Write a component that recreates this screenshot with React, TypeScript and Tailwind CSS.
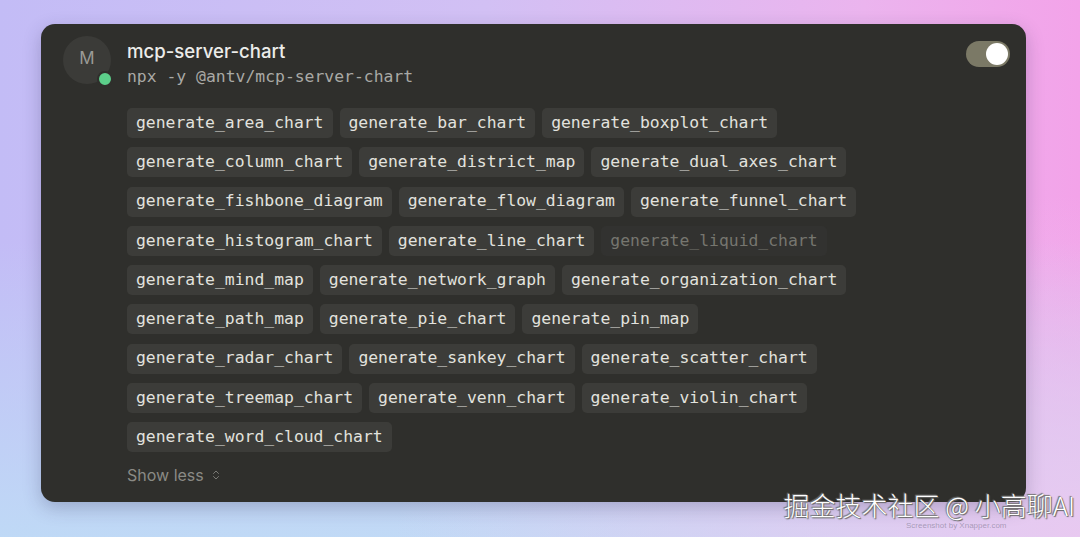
import React from 'react';
import { ChevronsUpDown } from 'lucide-react';

const tools: { name: string; disabled?: boolean }[] = [
  { name: 'generate_area_chart' },
  { name: 'generate_bar_chart' },
  { name: 'generate_boxplot_chart' },
  { name: 'generate_column_chart' },
  { name: 'generate_district_map' },
  { name: 'generate_dual_axes_chart' },
  { name: 'generate_fishbone_diagram' },
  { name: 'generate_flow_diagram' },
  { name: 'generate_funnel_chart' },
  { name: 'generate_histogram_chart' },
  { name: 'generate_line_chart' },
  { name: 'generate_liquid_chart', disabled: true },
  { name: 'generate_mind_map' },
  { name: 'generate_network_graph' },
  { name: 'generate_organization_chart' },
  { name: 'generate_path_map' },
  { name: 'generate_pie_chart' },
  { name: 'generate_pin_map' },
  { name: 'generate_radar_chart' },
  { name: 'generate_sankey_chart' },
  { name: 'generate_scatter_chart' },
  { name: 'generate_treemap_chart' },
  { name: 'generate_venn_chart' },
  { name: 'generate_violin_chart' },
  { name: 'generate_word_cloud_chart' },
];

// row breaks follow the screenshot
const rows = [
  [0, 1, 2],
  [3, 4, 5],
  [6, 7, 8],
  [9, 10, 11],
  [12, 13, 14],
  [15, 16, 17],
  [18, 19, 20],
  [21, 22, 23],
  [24],
];

const App = () => {
  return (
    <div className="relative h-[537px] w-[1080px] overflow-hidden bg-[linear-gradient(to_bottom,rgba(190,220,246,0)_45%,rgba(190,222,246,0.85)_100%),linear-gradient(to_right,#c3bcf6_0%,#d2c0f4_45%,#ebb4ee_80%,#f3a3e9_100%)] font-['Inter','Liberation_Sans',sans-serif]">
      <div className="absolute inset-0 bg-[radial-gradient(ellipse_at_100%_100%,rgba(236,200,240,0.9)_0%,rgba(236,200,240,0)_45%)]" />

      <div className="relative ml-[41px] mt-[24px] flex w-[985px] rounded-[14px] bg-[#2f2f2c] pb-[15px] pl-[22px] pr-[16px] pt-[12px] shadow-[0_6px_18px_rgba(40,40,80,0.25)]">
        {/* avatar */}
        <div className="relative h-[48px] w-[48px] shrink-0">
          <div className="flex h-[48px] w-[48px] items-center justify-center rounded-full bg-[#3b3b38] pb-[2px] text-[17px] text-[#9a9a96]">
            M
          </div>
          <span className="absolute left-[34px] top-[35px] h-[16px] w-[16px] rounded-full border-[2px] border-[#2f2f2c] bg-[#5ccf8a]" />
        </div>

        {/* content */}
        <div className="ml-[16px] flex-1">
          <div className="text-[18.6px] font-medium leading-[30px] text-[#ececea]">mcp-server-chart</div>
          <div className="font-['DejaVu_Sans_Mono',monospace] text-[16.4px] leading-[22px] text-[#a9a9a5]">
            npx -y @antv/mcp-server-chart
          </div>

          <div className="mt-[20px] flex flex-col gap-y-[9.3px]">
            {rows.map((row, i) => (
              <div key={i} className="flex gap-x-[7px]">
                {row.map((idx) => {
                  const t = tools[idx];
                  return (
                    <span
                      key={t.name}
                      className={
                        t.disabled
                          ? "flex h-[30px] items-center rounded-[5px] bg-[#323230] px-[9px] font-['DejaVu_Sans_Mono',monospace] text-[16.4px] text-[#76766f]"
                          : "flex h-[30px] items-center rounded-[5px] bg-[#3c3c39] px-[9px] font-['DejaVu_Sans_Mono',monospace] text-[16.4px] text-[#e2e2de]"
                      }
                    >
                      {t.name}
                    </span>
                  );
                })}
              </div>
            ))}
          </div>

          <button className="mt-[11px] flex h-[24px] items-center gap-[6px] text-[16px] text-[#8a8a85]">
            Show less
            <ChevronsUpDown size={12} strokeWidth={2} className="text-[#7a7a75]" />
          </button>
        </div>

        {/* toggle */}
        <div className="mt-[5px] flex h-[26px] w-[44px] shrink-0 items-center justify-end rounded-full bg-[#7b7966] px-[2px]">
          <span className="h-[22px] w-[22px] rounded-full bg-white" />
        </div>
      </div>

      {/* watermark */}
      <div className="absolute right-[5px] top-[488px] font-['Noto_Sans_CJK_SC',sans-serif] text-[26px] font-light leading-[34px] text-white [text-shadow:0_0_1px_#555,1px_1px_1px_#666,-1px_-1px_1px_#777]">
        掘金技术社区 @ 小高聊AI
      </div>
      <div className="absolute left-[906px] top-[521px] font-['Liberation_Sans',sans-serif] text-[8px] leading-[10px] text-[rgba(90,90,110,0.45)]">
        Screenshot by Xnapper.com
      </div>
    </div>
  );
};

export default App;
